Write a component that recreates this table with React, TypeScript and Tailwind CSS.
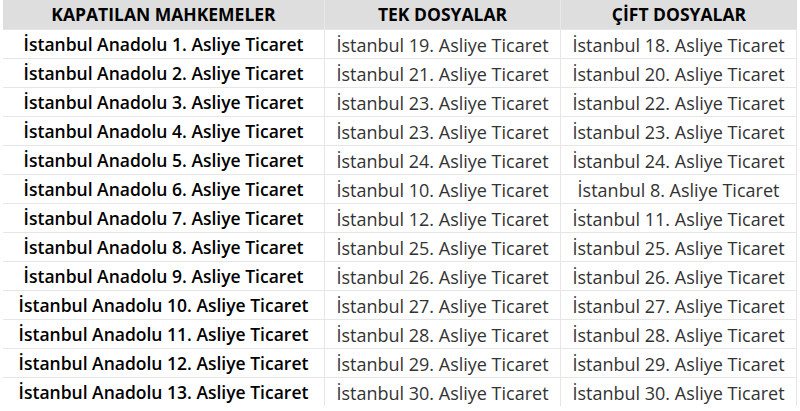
import React from "react";

const rows: [string, string, string][] = [
  ["İstanbul Anadolu 1. Asliye Ticaret", "İstanbul 19. Asliye Ticaret", "İstanbul 18. Asliye Ticaret"],
  ["İstanbul Anadolu 2. Asliye Ticaret", "İstanbul 21. Asliye Ticaret", "İstanbul 20. Asliye Ticaret"],
  ["İstanbul Anadolu 3. Asliye Ticaret", "İstanbul 23. Asliye Ticaret", "İstanbul 22. Asliye Ticaret"],
  ["İstanbul Anadolu 4. Asliye Ticaret", "İstanbul 23. Asliye Ticaret", "İstanbul 23. Asliye Ticaret"],
  ["İstanbul Anadolu 5. Asliye Ticaret", "İstanbul 24. Asliye Ticaret", "İstanbul 24. Asliye Ticaret"],
  ["İstanbul Anadolu 6. Asliye Ticaret", "İstanbul 10. Asliye Ticaret", "İstanbul 8. Asliye Ticaret"],
  ["İstanbul Anadolu 7. Asliye Ticaret", "İstanbul 12. Asliye Ticaret", "İstanbul 11. Asliye Ticaret"],
  ["İstanbul Anadolu 8. Asliye Ticaret", "İstanbul 25. Asliye Ticaret", "İstanbul 25. Asliye Ticaret"],
  ["İstanbul Anadolu 9. Asliye Ticaret", "İstanbul 26. Asliye Ticaret", "İstanbul 26. Asliye Ticaret"],
  ["İstanbul Anadolu 10. Asliye Ticaret", "İstanbul 27. Asliye Ticaret", "İstanbul 27. Asliye Ticaret"],
  ["İstanbul Anadolu 11. Asliye Ticaret", "İstanbul 28. Asliye Ticaret", "İstanbul 28. Asliye Ticaret"],
  ["İstanbul Anadolu 12. Asliye Ticaret", "İstanbul 29. Asliye Ticaret", "İstanbul 29. Asliye Ticaret"],
  ["İstanbul Anadolu 13. Asliye Ticaret", "İstanbul 30. Asliye Ticaret", "İstanbul 30. Asliye Ticaret"],
];

export default function App() {
  return (
    <div className="w-[800px] h-[411px] bg-white overflow-hidden pl-[3px] pt-0" style={{ fontFamily: '"Open Sans", "Noto Sans", sans-serif' }}>
      <div className="grid grid-cols-[322px_236px_236px] leading-none">
        <div className="h-[29px] bg-[#dedede] border-r border-[#e8e8e8] flex items-center justify-center font-bold text-black text-[17.5px] pt-[1px]">KAPATILAN MAHKEMELER</div>
        <div className="h-[29px] bg-[#dedede] border-r border-[#e8e8e8] flex items-center justify-center font-bold text-black text-[17.5px] pt-[1px]">TEK DOSYALAR</div>
        <div className="h-[29px] bg-[#dedede] flex items-center justify-center font-bold text-black text-[17.5px] pt-[1px]">ÇİFT DOSYALAR</div>
        {rows.map((r, i) => (
          <React.Fragment key={i}>
            <div className="h-[29px] border-t border-r border-[#e6e6e6] flex items-center justify-center font-semibold text-black text-[17.5px] pt-[1px]">{r[0]}</div>
            <div className="h-[29px] border-t border-r border-[#e6e6e6] flex items-center justify-center text-[#333] text-[18px] pt-[1px]">{r[1]}</div>
            <div className="h-[29px] border-t border-r border-[#e6e6e6] flex items-center justify-center text-[#333] text-[18px] pt-[1px]">{r[2]}</div>
          </React.Fragment>
        ))}
      </div>
    </div>
  );
}
